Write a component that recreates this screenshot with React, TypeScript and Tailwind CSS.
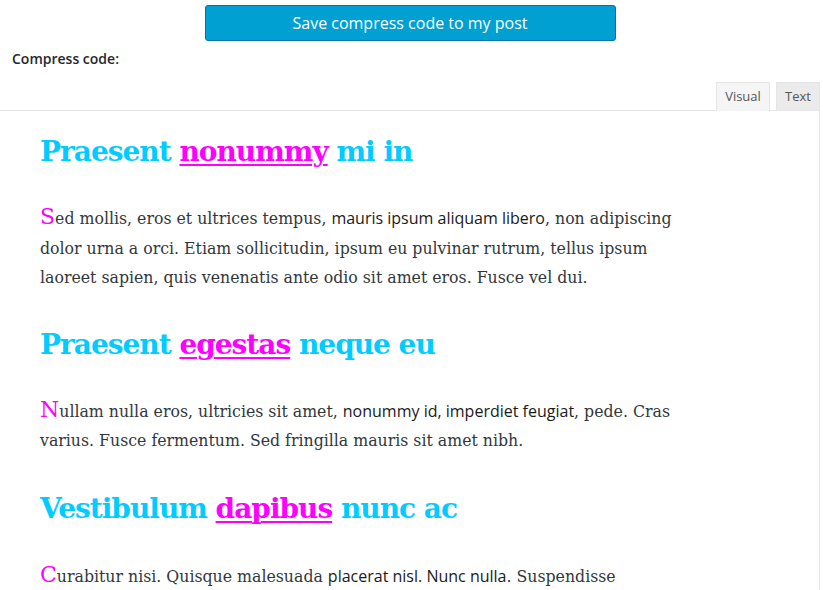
import React from 'react'

const serif = "font-['DejaVu_Serif','Liberation_Serif',serif]"
const comic = "font-['Open_Sans','Lato',sans-serif]"

function Drop({ children }: { children: React.ReactNode }) {
  return <span className="text-[22px] leading-none text-[#ff00ff]">{children}</span>
}

function Heading({ before, link, after }: { before: string; link: string; after: string }) {
  return (
    <h2 className={`${serif} text-[28px] font-bold leading-[40px] tracking-[-1px] text-[#00ccff]`}>
      {before} <a className="text-[#ff00ff] underline decoration-2 underline-offset-[3px]">{link}</a> {after}
    </h2>
  )
}

export default function App() {
  return (
    <div className="w-[823px] h-[590px] overflow-hidden bg-white font-['Open_Sans',sans-serif]">
      {/* Botón de guardar */}
      <div className="w-[820px] pt-[5px]">
        <button className="mx-auto flex h-[36px] w-[411px] items-center justify-center rounded-[3px] border border-[#0073aa] bg-[#00a0d2] text-[16px] text-white">
          Save compress code to my post
        </button>
      </div>

      <p className="ml-[12px] mt-[8px] text-[14px] font-semibold leading-[19px] text-[#23282d]">Compress code:</p>

      {/* Pestañas del editor */}
      <div className="mt-[14px] flex w-[820px] justify-end gap-[6px] pr-0">
        <div className="relative -mb-px h-[29px] w-[54px] border border-b-0 border-[#e5e5e5] bg-[#f5f5f5] text-center text-[13px] leading-[27px] text-[#555]">
          Visual
        </div>
        <div className="h-[28px] w-[44px] border border-[#e5e5e5] border-b-0 bg-[#ebebeb] text-center text-[13px] leading-[27px] text-[#555]">
          Text
        </div>
      </div>

      {/* Contenido */}
      <div className="h-[480px] w-[820px] border-t border-r border-[#e5e5e5] bg-white pl-[40px] pt-[21px]">
        <div className={`${serif} w-[636px] text-[15.75px] leading-[29.5px] text-[#32373c]`}>
          <Heading before="Praesent" link="nonummy" after="mi in" />
          <p className="mt-[32px]">
            <Drop>S</Drop>ed mollis, eros et ultrices tempus, <span className={`${comic} text-[16px] text-[#1a1a1a]`}>mauris ipsum aliquam libero</span>, non adipiscing dolor urna a orci. Etiam sollicitudin, ipsum eu pulvinar rutrum, tellus ipsum laoreet sapien, quis venenatis ante odio sit amet eros. Fusce vel dui.
          </p>
          <div className="mt-[32px]">
            <Heading before="Praesent" link="egestas" after="neque eu" />
          </div>
          <p className="mt-[32px]">
            <Drop>N</Drop>ullam nulla eros, ultricies sit amet, <span className={`${comic} text-[16px] text-[#1a1a1a]`}>nonummy id, imperdiet feugiat</span>, pede. Cras varius. Fusce fermentum. Sed fringilla mauris sit amet nibh.
          </p>
          <div className="mt-[33px]">
            <Heading before="Vestibulum" link="dapibus" after="nunc ac" />
          </div>
          <p className="mt-[33px]">
            <Drop>C</Drop>urabitur nisi. Quisque malesuada <span className={`${comic} text-[16px] text-[#1a1a1a]`}>placerat nisl. Nunc nulla</span>. Suspendisse potenti. Lorem ipsum dolor sit amet, consectetuer adipiscing elit.
          </p>
        </div>
      </div>
    </div>
  )
}
